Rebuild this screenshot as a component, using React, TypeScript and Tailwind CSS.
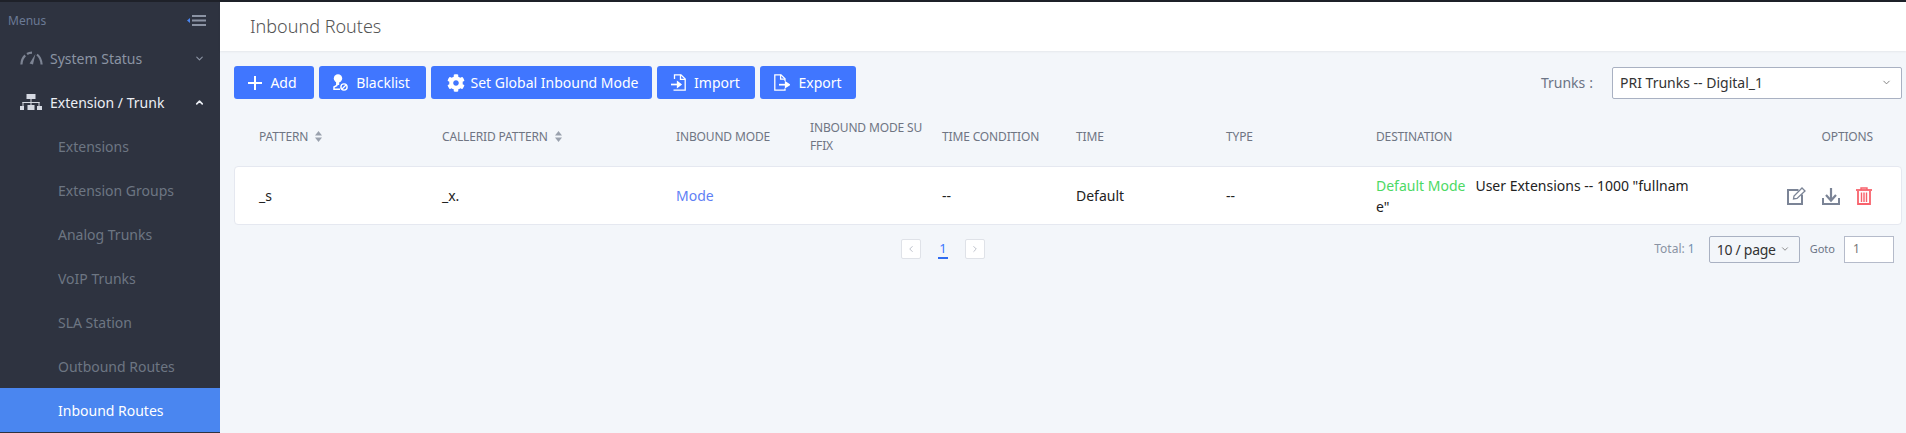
import React from "react";
import { ChevronDown, ChevronUp, ChevronLeft, ChevronRight } from "lucide-react";
import { FaCog } from "react-icons/fa";

const subItems = ["Extensions", "Extension Groups", "Analog Trunks", "VoIP Trunks", "SLA Station", "Outbound Routes"];

function Gauge() {
  return (
    <svg width="23" height="14" viewBox="0 0 23 14" fill="none" stroke="#7d8493" strokeWidth="2.2">
      <path d="M1.4 13.5C1.6 9.5 3 6.5 5.2 4.4" />
      <path d="M7 3C8.5 2 10 1.6 12 1.6" />
      <path d="M17 3.5C20 6 21.4 9.5 21.6 13.5" />
      <path d="M9.6 12.6L15.4 3L13 13.4Z" fill="#7d8493" stroke="none" />
    </svg>
  );
}

function Tree() {
  return (
    <svg width="22" height="16" viewBox="0 0 22 16" fill="#d5d9e2">
      <rect x="6.5" y="0" width="9" height="5" />
      <rect x="10.5" y="5" width="1" height="3" />
      <rect x="2.5" y="8" width="17" height="1" />
      <rect x="2.5" y="8" width="1" height="4" />
      <rect x="18.5" y="8" width="1" height="4" />
      <rect x="10.5" y="8" width="1" height="3" />
      <rect x="0" y="12" width="4" height="4" />
      <rect x="7.5" y="11" width="7" height="5" />
      <rect x="17" y="12" width="5" height="4" />
    </svg>
  );
}

function MenuFold() {
  return (
    <svg width="19" height="11" viewBox="0 0 19 11" fill="#8b93a3">
      <rect x="5" y="0" width="14" height="2" />
      <rect x="5" y="4.5" width="14" height="2" />
      <rect x="5" y="9" width="14" height="2" />
      <path d="M0 5.5L3 3V8Z" fill="#4a86f0" />
    </svg>
  );
}

function PlusIcon() {
  return (
    <svg width="14" height="14" viewBox="0 0 14 14" fill="#fff">
      <rect x="6" y="0" width="2" height="14" />
      <rect x="0" y="6" width="14" height="2" />
    </svg>
  );
}

function Blacklist() {
  return (
    <svg width="15" height="17" viewBox="0 0 15 17" fill="none">
      <circle cx="5" cy="4.4" r="4.2" fill="#fff" />
      <path d="M3.8 8V11.5L1 13V15.2H7" stroke="#fff" strokeWidth="1.5" />
      <path d="M3.8 8H6.2V11H3.8Z" fill="#fff" />
      <circle cx="11" cy="13" r="3.1" stroke="#fff" strokeWidth="1.4" />
      <path d="M9 15L13 11" stroke="#fff" strokeWidth="1.3" />
    </svg>
  );
}

function Import() {
  return (
    <svg width="15" height="17" viewBox="0 0 15 17" fill="none" stroke="#fff" strokeWidth="1.3">
      <path d="M3.5 5V0.8H10L14.2 5V16.2H2.5" />
      <path d="M9.5 0.8V5.4H14.2" />
      <path d="M0 10.5H7" strokeWidth="1.7" />
      <path d="M6.5 7.8L10 10.5L6.5 13.2Z" fill="#fff" />
    </svg>
  );
}

function Export() {
  return (
    <svg width="16" height="17" viewBox="0 0 16 17" fill="none" stroke="#fff" strokeWidth="1.3">
      <path d="M11 7V4.8L7 0.8H0.8V16.2H11V14.5" />
      <path d="M6.6 0.8V5.2H11" />
      <path d="M5 10.7H12" strokeWidth="1.7" />
      <path d="M11.5 8L15.5 10.7L11.5 13.4Z" fill="#fff" />
    </svg>
  );
}

function Edit() {
  return (
    <svg width="19" height="18" viewBox="0 0 19 18" fill="none" stroke="#7b8496">
      <path d="M11.5 3H1V17H15V7.5" strokeWidth="2" />
      <path d="M6.5 12L7 9L15 1L18 4L10 11.5Z" strokeWidth="1.3" />
    </svg>
  );
}

function Down() {
  return (
    <svg width="18" height="17" viewBox="0 0 18 17" fill="none" stroke="#7b8496">
      <path d="M1 10V16H17V10" strokeWidth="2" />
      <path d="M9 0V11" strokeWidth="2.2" />
      <path d="M4 7L9 12.5L14 7" strokeWidth="2.2" />
    </svg>
  );
}

function Trash() {
  return (
    <svg width="16" height="18" viewBox="0 0 16 18" fill="none" stroke="#f8626c">
      <path d="M0 3H16" strokeWidth="1.8" />
      <path d="M5 3V1H11V3" strokeWidth="1.4" />
      <path d="M2 4V17H14V4" strokeWidth="1.8" />
      <path d="M5.5 5.5V15M8 5.5V15M10.5 5.5V15" strokeWidth="1.4" />
    </svg>
  );
}

function Sort() {
  return (
    <svg width="7" height="11" viewBox="0 0 7 11" fill="#9aa1ad">
      <path d="M3.5 0L7 4.5H0Z" />
      <path d="M3.5 11L0 6.5H7Z" />
    </svg>
  );
}

function Btn({ icon, label, w }: { icon: React.ReactNode; label: string; w: string }) {
  return (
    <div className={`flex h-[33px] items-center justify-center gap-2 rounded-[3px] bg-[#4076ff] text-[14px] text-white ${w}`}>
      {icon}
      <span>{label}</span>
    </div>
  );
}

const cols = "grid grid-cols-[208px_234px_134px_132px_134px_150px_150px_1fr] ";

export default function App() {
  return (
    <div className="flex h-[433px] w-[1906px] flex-col overflow-hidden bg-[#f3f6fa] font-['Noto_Sans','Open_Sans',sans-serif] text-[14px] text-[#222]">
      <div className="h-[2px] shrink-0 bg-[#1e2129]" />
      <div className="flex min-h-0 flex-1">
        <aside className="flex w-[220px] shrink-0 flex-col bg-[#2e3340]">
          <div className="flex h-[36px] items-center justify-between pl-2 pr-[14px] pt-[1px] text-[12px] text-[#6b7a96]">
            <span>Menus</span>
            <MenuFold />
          </div>
          <div className="flex h-[42px] items-center pb-[2px] pl-5 pr-[15px] text-[14px] text-[#8b93a3]">
            <Gauge />
            <span className="ml-[7px] flex-1">System Status</span>
            <ChevronDown size={11} strokeWidth={2.5} />
          </div>
          <div className="flex h-[44px] items-center pl-5 pr-[15px] text-[14px] text-[#eceff5]">
            <Tree />
            <span className="ml-2 flex-1">Extension / Trunk</span>
            <ChevronUp size={11} strokeWidth={3.5} />
          </div>
          {subItems.map((s) => (
            <div key={s} className="flex h-[44px] items-center pl-[58px] text-[14px] text-[#6d7683]">
              {s}
            </div>
          ))}
          <div className="flex h-[44px] items-center bg-[#4a86f0] pl-[58px] text-[14px] text-white">Inbound Routes</div>
        </aside>
        <main className="flex min-w-0 flex-1 flex-col">
          <header className="flex h-[49px] shrink-0 items-center bg-white pl-[30px] text-[18px] font-light text-[#555] shadow-[0_1px_2px_rgba(0,0,0,0.06)]">
            Inbound Routes
          </header>
          <div className="flex flex-col pl-[14px] pr-[4px]">
            <div className="mt-[15px] flex items-center justify-between">
              <div className="flex gap-[5px]">
                <Btn w="w-[80px] pr-[3px]" label="Add" icon={<PlusIcon />} />
                <Btn w="w-[107px] pr-[2px]" label="Blacklist" icon={<Blacklist />} />
                <Btn w="w-[221px]" label="Set Global Inbound Mode" icon={<FaCog size={18} className="-mr-[2px] ml-[2px]" />} />
                <Btn w="w-[98px] pr-[1px]" label="Import" icon={<Import />} />
                <Btn w="w-[96px]" label="Export" icon={<Export />} />
              </div>
              <div className="flex items-center">
                <span className="mr-[19px] text-[14px] text-[#6b7485]">Trunks<span className="ml-[4px]">:</span></span>
                <div className="flex h-[32px] w-[290px] items-center justify-between rounded-[2px] border border-[#a9b1c2] bg-white pl-[7px] pr-[9px] text-[14px] text-[#333]">
                  <span>PRI Trunks -- Digital_1</span>
                  <ChevronDown size={11} className="text-[#777]" />
                </div>
              </div>
            </div>
            <div className={cols + "h-[67px] items-center pl-[25px] pr-[29px] pt-[8px] text-[12px] leading-[18px] tracking-[-0.15px] text-[#6f7583]"}>
              <div className="flex items-center gap-[7px]">PATTERN <Sort /></div>
              <div className="flex items-center gap-[7px] -ml-[25px]">CALLERID PATTERN <Sort /></div>
              <div className="-ml-[25px]">INBOUND MODE</div>
              <div className="-ml-[25px] w-[118px] break-all">INBOUND MODE SUFFIX</div>
              <div className="-ml-[25px]">TIME CONDITION</div>
              <div className="-ml-[25px]">TIME</div>
              <div className="-ml-[25px]">TYPE</div>
              <div className="-ml-[25px] flex justify-between"><span>DESTINATION</span><span>OPTIONS</span></div>
            </div>
            <div className={cols + "h-[59px] items-center rounded-[4px] border border-[#e5e8f0] bg-white pl-[24px] pr-[29px] text-[14px] text-[#222]"}>
              <div>_s</div>
              <div className="-ml-[25px]">_x.</div>
              <div className="-ml-[25px] text-[#5f7ff5]">Mode</div>
              <div />
              <div className="-ml-[25px]">--</div>
              <div className="-ml-[25px]">Default</div>
              <div className="-ml-[25px]">--</div>
              <div className="-ml-[25px] flex items-center justify-between">
                <div className="w-[318px] break-all leading-[21px]">
                  <span className="mr-[10px] text-[#4cd964]">Default Mode</span>User Extensions -- 1000 "fullname"
                </div>
                <div className="flex items-center gap-[16px] pt-[1px]">
                  <Edit />
                  <Down />
                  <Trash />
                </div>
              </div>
            </div>
            <div className="relative mt-[10px] flex h-[28px] items-center justify-end pr-[8px] text-[12px]">
              <div className="absolute left-[667px] top-[4px] flex items-center text-[#b0b5c0]">
                <div className="flex h-[20px] w-[20px] items-center justify-center rounded-[2px] border border-[#dfe2e8] bg-white"><ChevronLeft size={10} /></div>
                <div className="mx-[17px] w-[10px] border-b-2 border-[#2f6bf0] text-center text-[13px] leading-[17px] text-[#4076ff]">1</div>
                <div className="flex h-[20px] w-[20px] items-center justify-center rounded-[2px] border border-[#dfe2e8] bg-white"><ChevronRight size={10} /></div>
              </div>
              <span className="mr-[14px] text-[12px] text-[#8a93a3]">Total: <span className="text-[#6f8fb0]">1</span></span>
              <div className="flex h-[27px] w-[91px] items-center justify-center gap-1 rounded-[2px] border border-[#a9b1c2] pr-[2px] text-[14px] tracking-[-0.3px] text-[#333]">
                10 / page <ChevronDown size={10} className="text-[#777]" />
              </div>
              <span className="ml-[10px] mr-[9px] text-[11px] text-[#6b7485]">Goto</span>
              <div className="flex h-[27px] w-[50px] items-center border border-[#b5bbca] bg-white pl-2 text-[12px] text-[#777]">1</div>
            </div>
          </div>
        </main>
      </div>
    </div>
  );
}
